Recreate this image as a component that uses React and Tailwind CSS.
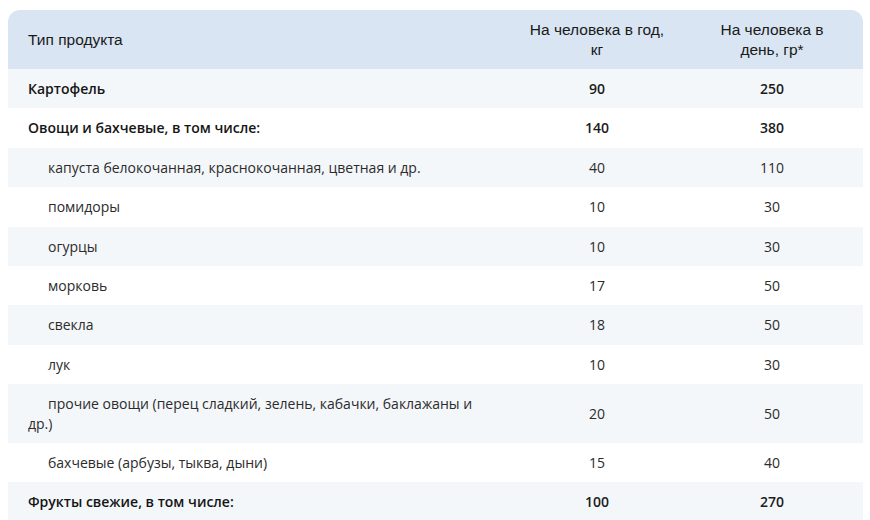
const ROWS = [
  { name: 'Картофель', year: '90', day: '250', bold: true },
  { name: 'Овощи и бахчевые, в том числе:', year: '140', day: '380', bold: true },
  { name: 'капуста белокочанная, краснокочанная, цветная и др.', year: '40', day: '110' },
  { name: 'помидоры', year: '10', day: '30' },
  { name: 'огурцы', year: '10', day: '30' },
  { name: 'морковь', year: '17', day: '50' },
  { name: 'свекла', year: '18', day: '50' },
  { name: 'лук', year: '10', day: '30' },
  { name: 'прочие овощи (перец сладкий, зелень, кабачки, баклажаны и др.)', year: '20', day: '50' },
  { name: 'бахчевые (арбузы, тыква, дыни)', year: '15', day: '40' },
  { name: 'Фрукты свежие, в том числе:', year: '100', day: '270', bold: true },
]

export default function App() {
  return (
    <div className="h-[520px] overflow-hidden bg-white pt-[10px] pl-[8px] pr-[7px]">
      <table className="w-[855px] table-fixed border-separate border-spacing-0 text-[14px] leading-[19.4px] text-[#1c1c1c] font-['Open_Sans',sans-serif]">
        <colgroup>
          <col className="w-[505px]" />
          <col className="w-[168px]" />
          <col />
        </colgroup>
        <thead>
          <tr className="bg-[#d9e5f3] font-['Liberation_Sans',sans-serif] text-[15.5px] leading-[19.5px] text-[#1a1a1a]">
            <th className="h-[59px] rounded-tl-[12px] pl-[20px] text-left font-normal">Тип продукта</th>
            <th className="text-center font-normal">
              <div className="mx-auto w-[138px]">На человека в год, кг</div>
            </th>
            <th className="rounded-tr-[12px] text-center font-normal">
              <div className="mx-auto w-[138px]">На человека в день, гр*</div>
            </th>
          </tr>
        </thead>
        <tbody>
          {ROWS.map((r, i) => (
            <tr key={i} className={i % 2 === 0 ? 'bg-[#f4f7fa]' : 'bg-white'}>
              <td
                className={
                  r.bold
                    ? 'py-[10px] pl-[20px] pr-[22px] font-semibold text-[#151515]'
                    : 'py-[10px] pl-[20px] pr-[22px] indent-[20px] text-[#2b2b2b]'
                }
              >
                {r.name}
              </td>
              <td className={r.bold ? 'text-center font-semibold' : 'text-center text-[#2b2b2b]'}>{r.year}</td>
              <td className={r.bold ? 'text-center font-semibold' : 'text-center text-[#2b2b2b]'}>{r.day}</td>
            </tr>
          ))}
        </tbody>
      </table>
    </div>
  )
}
